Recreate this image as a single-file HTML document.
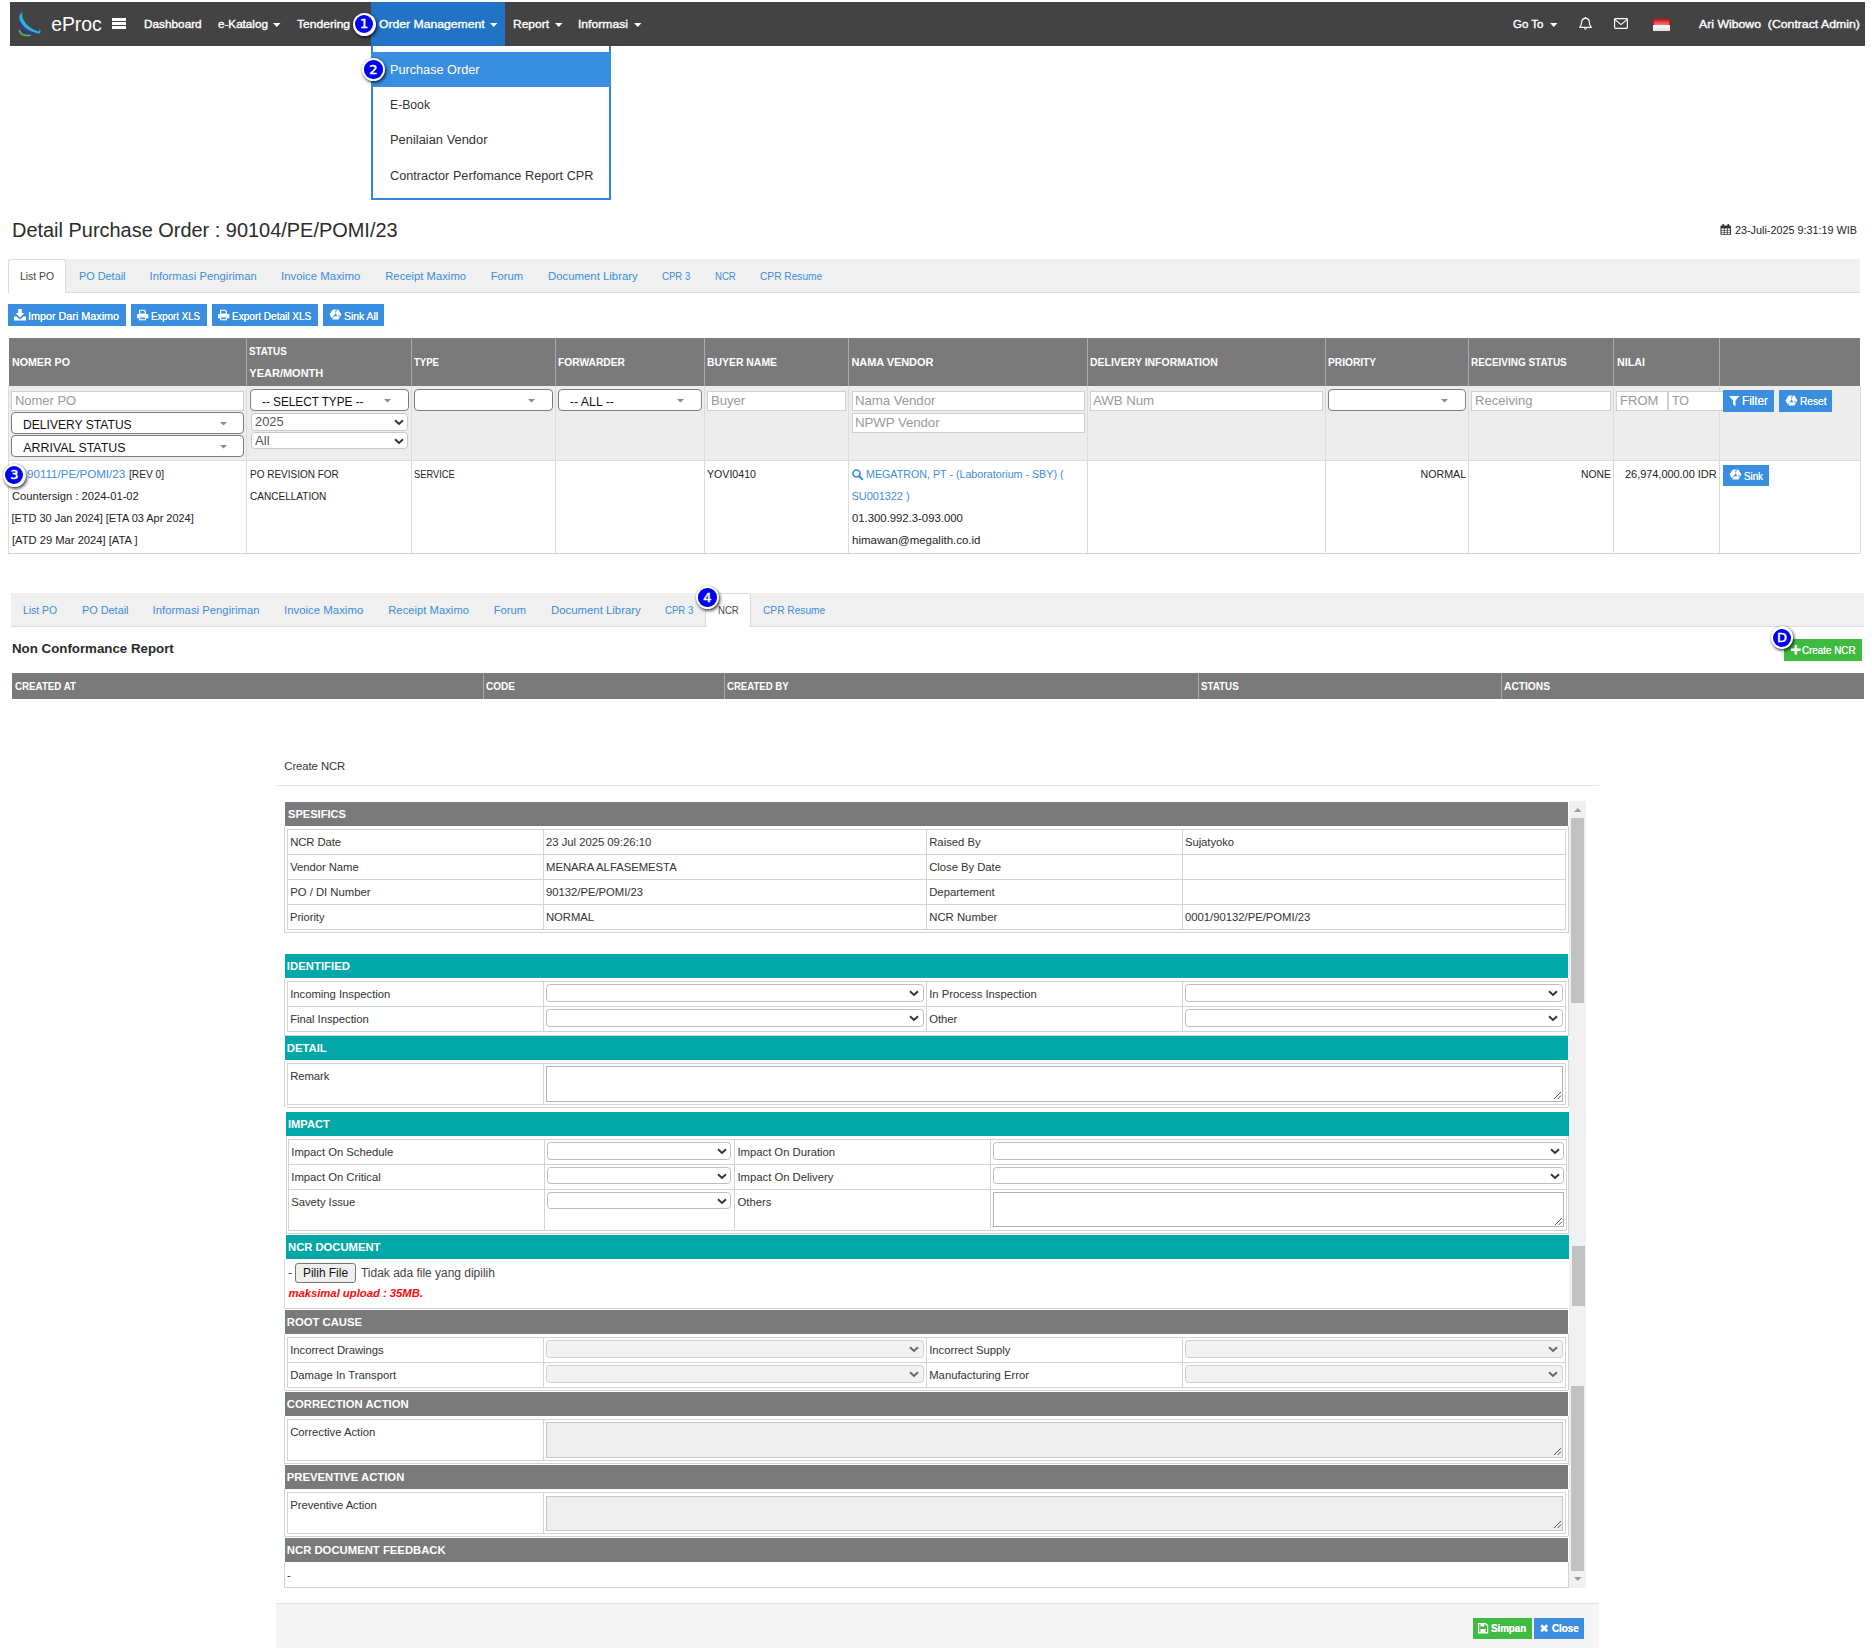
<!DOCTYPE html>
<html lang="id"><head><meta charset="utf-8"><title>eProc - Detail Purchase Order</title>
<style>
html,body{margin:0;padding:0;background:#fff;}
body{width:1872px;height:1648px;position:relative;overflow:hidden;font-family:"Liberation Sans",sans-serif;}
.a{position:absolute;box-sizing:border-box;}
.t{white-space:nowrap;}
svg{display:block;overflow:visible;}
.nv{-webkit-text-stroke:.35px #fff;}
.hb{-webkit-text-stroke:.2px #fff;}
</style></head>
<body>
<div class="a" style="left:10px;top:2px;width:1855px;height:43.5px;background:#434343;"></div>
<div class="a" style="left:371px;top:2px;width:134px;height:43.5px;background:#2173c5;"></div>
<svg class="a" style="left:18px;top:11px;" width="24" height="26" viewBox="0 0 24 26"><path d="M1.5 19.6C2.2 23.4 6.8 25.2 12.2 24.2" fill="none" stroke="#5cb947" stroke-width="1.7" stroke-linecap="round"/><path d="M2 13.2C2 18.6 8 23.4 15.4 22.8" fill="none" stroke="#2b3c9c" stroke-width="2.4" stroke-linecap="round"/><path d="M4.6 1.2C1.2 2.6 0.4 6.2 2.6 10.8C5.6 17 13 21.6 21.4 22.4C22.8 21.8 23 19.8 21.6 17.6C21.8 19.4 21.4 20.4 20.4 20.4C14.2 18.6 9 14.8 6 9.8C4 6.4 3.6 3.4 4.6 1.2Z" fill="#27b4ea"/></svg>
<span class="a t " id="t1" style="top:9.5px;font-size:19.4px;line-height:28px;color:#fff;left:51.3px;letter-spacing:-0.071px;">eProc</span>
<div class="a" style="left:111.8px;top:18px;width:14.2px;height:2.7px;background:#fff;"></div>
<div class="a" style="left:111.8px;top:22.2px;width:14.2px;height:2.7px;background:#fff;"></div>
<div class="a" style="left:111.8px;top:26.4px;width:14.2px;height:2.7px;background:#fff;"></div>
<span class="a t nv" id="t2" style="top:15.9px;font-size:11px;line-height:16px;color:#fff;left:144.4px;transform:scaleX(1.0719);transform-origin:left center;">Dashboard</span>
<span class="a t nv" id="t3" style="top:15.9px;font-size:11px;line-height:16px;color:#fff;left:218px;transform:scaleX(1.0596);transform-origin:left center;">e-Katalog</span>
<svg class="a" style="left:273.4px;top:22.6px;" width="7.5" height="4" viewBox="0 0 7.5 4"><path d="M0 0H7.5L3.75 4Z" fill="#fff"/></svg>
<span class="a t nv" id="t4" style="top:15.9px;font-size:11px;line-height:16px;color:#fff;left:296.7px;transform:scaleX(1.0987);transform-origin:left center;">Tendering</span>
<span class="a t nv" id="t5" style="top:15.9px;font-size:11px;line-height:16px;color:#fff;left:378.6px;transform:scaleX(1.1070);transform-origin:left center;">Order Management</span>
<svg class="a" style="left:490.2px;top:22.6px;" width="7.5" height="4" viewBox="0 0 7.5 4"><path d="M0 0H7.5L3.75 4Z" fill="#fff"/></svg>
<span class="a t nv" id="t6" style="top:15.9px;font-size:11px;line-height:16px;color:#fff;left:513px;transform:scaleX(1.0899);transform-origin:left center;">Report</span>
<svg class="a" style="left:555.2px;top:22.6px;" width="7.5" height="4" viewBox="0 0 7.5 4"><path d="M0 0H7.5L3.75 4Z" fill="#fff"/></svg>
<span class="a t nv" id="t7" style="top:15.9px;font-size:11px;line-height:16px;color:#fff;left:578.2px;transform:scaleX(1.1028);transform-origin:left center;">Informasi</span>
<svg class="a" style="left:634px;top:22.6px;" width="7.5" height="4" viewBox="0 0 7.5 4"><path d="M0 0H7.5L3.75 4Z" fill="#fff"/></svg>
<span class="a t nv" id="t8" style="top:15.9px;font-size:11px;line-height:16px;color:#fff;left:1513.3px;transform:scaleX(1.0427);transform-origin:left center;">Go To</span>
<svg class="a" style="left:1549.7px;top:22.6px;" width="7.5" height="4" viewBox="0 0 7.5 4"><path d="M0 0H7.5L3.75 4Z" fill="#fff"/></svg>
<svg class="a" style="left:1579px;top:17px;" width="13" height="13" viewBox="0 0 13 13"><path d="M6.5 0.6C6.9 0.6 7.2 0.9 7.2 1.4C9.3 1.8 10.4 3.5 10.4 5.6C10.4 8 11.1 9.3 12.3 10.3H0.7C1.9 9.3 2.6 8 2.6 5.6C2.6 3.5 3.7 1.8 5.8 1.4C5.8 0.9 6.1 0.6 6.5 0.6Z" fill="none" stroke="#fff" stroke-width="1.15" stroke-linejoin="round"/><path d="M5 11.2C5.2 12.2 5.8 12.6 6.5 12.6C7.2 12.6 7.8 12.2 8 11.2Z" fill="#fff"/></svg>
<svg class="a" style="left:1614px;top:18.3px;" width="14" height="11" viewBox="0 0 14 11"><rect x="0.6" y="0.6" width="12.8" height="9.8" rx="0.8" fill="none" stroke="#fff" stroke-width="1.15"/><path d="M1 1.6L7 6.6L13 1.6" fill="none" stroke="#fff" stroke-width="1.15"/></svg>
<div class="a" style="left:1652.7px;top:19px;width:17.7px;height:6.4px;background:linear-gradient(#e00808,#e23a3a 25%,#ea7b7b);border:1px solid #e00a0a;border-radius:1px 1px 0 0;border-bottom:none;"></div>
<div class="a" style="left:1652.7px;top:25.4px;width:17.7px;height:5.4px;background:linear-gradient(#fbfbfb,#e2e2e2);"></div>
<span class="a t nv" id="t9" style="top:15.9px;font-size:11px;line-height:16px;color:#fff;left:1699.4px;transform:scaleX(1.1146);transform-origin:left center;white-space:pre;">Ari Wibowo  (Contract Admin)</span>
<div class="a" style="left:352.8px;top:12.8px;width:22.8px;height:22.8px;border-radius:50%;background:#fff;box-shadow:1.2px 1.8px 3.2px rgba(0,0,0,.7),0 0 2px rgba(0,0,0,.25);"></div>
<div class="a" style="left:355.1px;top:15.1px;width:18.2px;height:18.2px;border-radius:50%;background:#0000f0;"></div>
<span class="a t" style="left:354.2px;width:20px;text-align:center;top:15.2px;line-height:18px;font-size:13px;color:#fff;font-family:'DejaVu Sans',sans-serif;-webkit-text-stroke:.5px #fff;">1</span>
<div class="a" style="left:371px;top:45.5px;width:240px;height:154px;background:#fff;border:2px solid #2f86dc;border-top:none;"></div>
<div class="a" style="left:371px;top:52px;width:240px;height:34.7px;background:#398ee0;"></div>
<span class="a t " id="t10" style="top:61px;font-size:12px;line-height:18px;color:#fff;left:389.5px;transform:scaleX(1.0566);transform-origin:left center;">Purchase Order</span>
<span class="a t " id="t11" style="top:95.5px;font-size:12px;line-height:18px;color:#333;left:389.5px;transform:scaleX(1.0163);transform-origin:left center;">E-Book</span>
<span class="a t " id="t12" style="top:130.5px;font-size:12px;line-height:18px;color:#333;left:389.5px;transform:scaleX(1.0744);transform-origin:left center;">Penilaian Vendor</span>
<span class="a t " id="t13" style="top:166.5px;font-size:12px;line-height:18px;color:#333;left:389.5px;transform:scaleX(1.0595);transform-origin:left center;">Contractor Perfomance Report CPR</span>
<div class="a" style="left:362.1px;top:58.1px;width:22.8px;height:22.8px;border-radius:50%;background:#fff;box-shadow:1.2px 1.8px 3.2px rgba(0,0,0,.7),0 0 2px rgba(0,0,0,.25);"></div>
<div class="a" style="left:364.4px;top:60.4px;width:18.2px;height:18.2px;border-radius:50%;background:#0000f0;"></div>
<span class="a t" style="left:363.5px;width:20px;text-align:center;top:60.5px;line-height:18px;font-size:13px;color:#fff;font-family:'DejaVu Sans',sans-serif;-webkit-text-stroke:.5px #fff;">2</span>
<span class="a t " id="t14" style="top:215px;font-size:19.6px;line-height:30px;color:#2b2b2b;left:12px;transform:scaleX(1.0174);transform-origin:left center;">Detail Purchase Order : 90104/PE/POMI/23</span>
<svg class="a" style="left:1720px;top:224.2px;" width="11.5" height="11.8" viewBox="0 0 11.5 11.8"><rect x="0.5" y="1.6" width="10.5" height="9.4" rx="1" fill="#333"/><rect x="2.4" y="0" width="1.6" height="3" rx=".6" fill="#333"/><rect x="7.5" y="0" width="1.6" height="3" rx=".6" fill="#333"/><g fill="#fff"><rect x="1.6" y="4.4" width="2.2" height="1.7"/><rect x="4.65" y="4.4" width="2.2" height="1.7"/><rect x="7.7" y="4.4" width="2.2" height="1.7"/><rect x="1.6" y="6.6" width="2.2" height="1.7"/><rect x="4.65" y="6.6" width="2.2" height="1.7"/><rect x="7.7" y="6.6" width="2.2" height="1.7"/><rect x="1.6" y="8.8" width="2.2" height="1.5"/><rect x="4.65" y="8.8" width="2.2" height="1.5"/><rect x="7.7" y="8.8" width="2.2" height="1.5"/></g></svg>
<span class="a t " id="t15" style="top:222px;font-size:11px;line-height:16px;color:#222;left:1735px;transform:scaleX(0.9828);transform-origin:left center;">23-Juli-2025 9:31:19 WIB</span>
<div class="a" style="left:8px;top:259.3px;width:1852px;height:33.30000000000001px;background:#f0f0f0;"></div>
<div class="a" style="left:8px;top:291.6px;width:1852px;height:1px;background:#dcdcdc;"></div>
<div class="a" style="left:8px;top:259.3px;width:57.5px;height:33.30000000000001px;background:#fff;border:1px solid #dcdcdc;border-radius:4px 4px 0 0;border-bottom:none;"></div>
<span class="a t " id="t16" style="top:267.75px;font-size:11.2px;line-height:17px;color:#444;left:20px;transform:scaleX(0.9267);transform-origin:left center;">List PO</span>
<span class="a t " id="t17" style="top:267.75px;font-size:11.2px;line-height:17px;color:#3b8ddd;left:78.75px;transform:scaleX(0.9713);transform-origin:left center;">PO Detail</span>
<span class="a t " id="t18" style="top:267.75px;font-size:11.2px;line-height:17px;color:#3b8ddd;left:149.5px;letter-spacing:0.077px;">Informasi Pengiriman</span>
<span class="a t " id="t19" style="top:267.75px;font-size:11.2px;line-height:17px;color:#3b8ddd;left:281.25px;transform:scaleX(1.0197);transform-origin:left center;">Invoice Maximo</span>
<span class="a t " id="t20" style="top:267.75px;font-size:11.2px;line-height:17px;color:#3b8ddd;left:385.25px;letter-spacing:0.039px;">Receipt Maximo</span>
<span class="a t " id="t21" style="top:267.75px;font-size:11.2px;line-height:17px;color:#3b8ddd;left:490.75px;letter-spacing:-0.016px;">Forum</span>
<span class="a t " id="t22" style="top:267.75px;font-size:11.2px;line-height:17px;color:#3b8ddd;left:547.5px;transform:scaleX(1.0165);transform-origin:left center;">Document Library</span>
<span class="a t " id="t23" style="top:267.75px;font-size:11.2px;line-height:17px;color:#3b8ddd;left:661.75px;transform:scaleX(0.8573);transform-origin:left center;">CPR 3</span>
<span class="a t " id="t24" style="top:267.75px;font-size:11.2px;line-height:17px;color:#3b8ddd;left:714.5px;transform:scaleX(0.8557);transform-origin:left center;">NCR</span>
<span class="a t " id="t25" style="top:267.75px;font-size:11.2px;line-height:17px;color:#3b8ddd;left:760px;transform:scaleX(0.9102);transform-origin:left center;">CPR Resume</span>
<div class="a" style="left:8px;top:304.3px;width:117.8px;height:21.5px;background:#398ee0;"></div>
<span class="a t " id="t26" style="top:307.15px;font-size:11.6px;line-height:17px;color:#fff;left:28.3px;transform:scaleX(0.9293);transform-origin:left center;text-shadow:0 0 .6px #fff;">Impor Dari Maximo</span>
<svg class="a" style="left:14.2px;top:309.2px;" width="12" height="11.4" viewBox="0 0 12 11.4"><path d="M4.2 0H7.8V4H10.4L6 8.4L1.6 4H4.2Z" fill="#fff"/><path d="M0 7.6H2.6L6 10.6L9.4 7.6H12V11.4H0Z" fill="#fff"/></svg>
<div class="a" style="left:131px;top:304.3px;width:75.80000000000001px;height:21.5px;background:#398ee0;"></div>
<span class="a t " id="t27" style="top:307.15px;font-size:11.6px;line-height:17px;color:#fff;left:151.3px;transform:scaleX(0.8354);transform-origin:left center;text-shadow:0 0 .6px #fff;">Export XLS</span>
<svg class="a" style="left:137.3px;top:309.6px;" width="11.4" height="10.2" viewBox="0 0 13 11"><path d="M3 0H8.2L9.6 1.4V4.4H3Z" fill="none" stroke="#fff" stroke-width="1.3"/><path d="M0.8 4.2H11.8C12.5 4.2 13 4.7 13 5.4V9H10.4V7.2H2.6V9H0V5.4C0 4.7 0.3 4.2 0.8 4.2Z" fill="#fff"/><rect x="3" y="7.6" width="6.8" height="3.2" fill="none" stroke="#fff" stroke-width="1.3"/></svg>
<div class="a" style="left:212px;top:304.3px;width:105.80000000000001px;height:21.5px;background:#398ee0;"></div>
<span class="a t " id="t28" style="top:307.15px;font-size:11.6px;line-height:17px;color:#fff;left:232.2px;transform:scaleX(0.8665);transform-origin:left center;text-shadow:0 0 .6px #fff;">Export Detail XLS</span>
<svg class="a" style="left:218.3px;top:309.6px;" width="11.4" height="10.2" viewBox="0 0 13 11"><path d="M3 0H8.2L9.6 1.4V4.4H3Z" fill="none" stroke="#fff" stroke-width="1.3"/><path d="M0.8 4.2H11.8C12.5 4.2 13 4.7 13 5.4V9H10.4V7.2H2.6V9H0V5.4C0 4.7 0.3 4.2 0.8 4.2Z" fill="#fff"/><rect x="3" y="7.6" width="6.8" height="3.2" fill="none" stroke="#fff" stroke-width="1.3"/></svg>
<div class="a" style="left:323px;top:304.3px;width:60.80000000000001px;height:21.5px;background:#398ee0;"></div>
<span class="a t " id="t29" style="top:307.15px;font-size:11.6px;line-height:17px;color:#fff;left:343.5px;transform:scaleX(0.8940);transform-origin:left center;text-shadow:0 0 .6px #fff;">Sink All</span>
<svg class="a" style="left:329.3px;top:309.4px;" width="13" height="11.2" viewBox="0 0 13 11.2"><path d="M1.4 5.6L4 1.4H9L11.6 5.6L9 9.8H4Z" fill="#fff" stroke="#fff" stroke-width="1.6" stroke-linejoin="round"/><path d="M6.5 4.2L8.3 7.2H4.7Z" fill="#398ee0"/><g stroke="#398ee0" stroke-width="0.9" fill="none"><path d="M7.4 0L6.6 3.6"/><path d="M12.6 7.4L9 6.8"/><path d="M2.6 10.6L4.6 7.6"/></g></svg>
<div class="a" style="left:8.5px;top:338px;width:1851.8px;height:47.8px;background:#7a7a7a;"></div>
<div class="a" style="left:8.5px;top:385.8px;width:1851.8px;height:75px;background:#ededed;"></div>
<div class="a" style="left:245.8px;top:338px;width:1px;height:47.8px;background:#a9a9a9;"></div>
<div class="a" style="left:245.8px;top:385.8px;width:1px;height:75px;background:#dcdcdc;"></div>
<div class="a" style="left:245.8px;top:460.8px;width:1px;height:92.5px;background:#dcdcdc;"></div>
<div class="a" style="left:410.8px;top:338px;width:1px;height:47.8px;background:#a9a9a9;"></div>
<div class="a" style="left:410.8px;top:385.8px;width:1px;height:75px;background:#dcdcdc;"></div>
<div class="a" style="left:410.8px;top:460.8px;width:1px;height:92.5px;background:#dcdcdc;"></div>
<div class="a" style="left:554.8px;top:338px;width:1px;height:47.8px;background:#a9a9a9;"></div>
<div class="a" style="left:554.8px;top:385.8px;width:1px;height:75px;background:#dcdcdc;"></div>
<div class="a" style="left:554.8px;top:460.8px;width:1px;height:92.5px;background:#dcdcdc;"></div>
<div class="a" style="left:703.8px;top:338px;width:1px;height:47.8px;background:#a9a9a9;"></div>
<div class="a" style="left:703.8px;top:385.8px;width:1px;height:75px;background:#dcdcdc;"></div>
<div class="a" style="left:703.8px;top:460.8px;width:1px;height:92.5px;background:#dcdcdc;"></div>
<div class="a" style="left:847.9px;top:338px;width:1px;height:47.8px;background:#a9a9a9;"></div>
<div class="a" style="left:847.9px;top:385.8px;width:1px;height:75px;background:#dcdcdc;"></div>
<div class="a" style="left:847.9px;top:460.8px;width:1px;height:92.5px;background:#dcdcdc;"></div>
<div class="a" style="left:1087.0px;top:338px;width:1px;height:47.8px;background:#a9a9a9;"></div>
<div class="a" style="left:1087.0px;top:385.8px;width:1px;height:75px;background:#dcdcdc;"></div>
<div class="a" style="left:1087.0px;top:460.8px;width:1px;height:92.5px;background:#dcdcdc;"></div>
<div class="a" style="left:1324.9px;top:338px;width:1px;height:47.8px;background:#a9a9a9;"></div>
<div class="a" style="left:1324.9px;top:385.8px;width:1px;height:75px;background:#dcdcdc;"></div>
<div class="a" style="left:1324.9px;top:460.8px;width:1px;height:92.5px;background:#dcdcdc;"></div>
<div class="a" style="left:1467.5px;top:338px;width:1px;height:47.8px;background:#a9a9a9;"></div>
<div class="a" style="left:1467.5px;top:385.8px;width:1px;height:75px;background:#dcdcdc;"></div>
<div class="a" style="left:1467.5px;top:460.8px;width:1px;height:92.5px;background:#dcdcdc;"></div>
<div class="a" style="left:1612.7px;top:338px;width:1px;height:47.8px;background:#a9a9a9;"></div>
<div class="a" style="left:1612.7px;top:385.8px;width:1px;height:75px;background:#dcdcdc;"></div>
<div class="a" style="left:1612.7px;top:460.8px;width:1px;height:92.5px;background:#dcdcdc;"></div>
<div class="a" style="left:1719.0px;top:338px;width:1px;height:47.8px;background:#a9a9a9;"></div>
<div class="a" style="left:1719.0px;top:385.8px;width:1px;height:75px;background:#dcdcdc;"></div>
<div class="a" style="left:1719.0px;top:460.8px;width:1px;height:92.5px;background:#dcdcdc;"></div>
<div class="a" style="left:8px;top:385.8px;width:1px;height:167.5px;background:#dcdcdc;"></div>
<div class="a" style="left:1859.8px;top:385.8px;width:1px;height:167.5px;background:#dcdcdc;"></div>
<div class="a" style="left:8px;top:460.3px;width:1852.3px;height:1px;background:#dcdcdc;"></div>
<div class="a" style="left:8px;top:552.6px;width:1852.3px;height:1.4px;background:#d2d2d2;"></div>
<span class="a t " id="t30" style="top:353.8px;font-size:11px;line-height:16px;color:#fff;font-weight:700;left:11.5px;transform:scaleX(0.9682);transform-origin:left center;">NOMER PO</span>
<span class="a t " id="t31" style="top:342.8px;font-size:11px;line-height:16px;color:#fff;font-weight:700;left:249.3px;transform:scaleX(0.8897);transform-origin:left center;">STATUS</span>
<span class="a t " id="t32" style="top:364.8px;font-size:11px;line-height:16px;color:#fff;font-weight:700;left:249.3px;letter-spacing:0.005px;">YEAR/MONTH</span>
<span class="a t " id="t33" style="top:353.8px;font-size:11px;line-height:16px;color:#fff;font-weight:700;left:414.3px;transform:scaleX(0.8700);transform-origin:left center;">TYPE</span>
<span class="a t " id="t34" style="top:353.8px;font-size:11px;line-height:16px;color:#fff;font-weight:700;left:558px;transform:scaleX(0.9316);transform-origin:left center;">FORWARDER</span>
<span class="a t " id="t35" style="top:353.8px;font-size:11px;line-height:16px;color:#fff;font-weight:700;left:707px;transform:scaleX(0.9465);transform-origin:left center;">BUYER NAME</span>
<span class="a t " id="t36" style="top:353.8px;font-size:11px;line-height:16px;color:#fff;font-weight:700;left:851.5px;letter-spacing:-0.084px;">NAMA VENDOR</span>
<span class="a t " id="t37" style="top:353.8px;font-size:11px;line-height:16px;color:#fff;font-weight:700;left:1090px;transform:scaleX(0.9512);transform-origin:left center;">DELIVERY INFORMATION</span>
<span class="a t " id="t38" style="top:353.8px;font-size:11px;line-height:16px;color:#fff;font-weight:700;left:1328.4px;transform:scaleX(0.9258);transform-origin:left center;">PRIORITY</span>
<span class="a t " id="t39" style="top:353.8px;font-size:11px;line-height:16px;color:#fff;font-weight:700;left:1471.3px;transform:scaleX(0.9034);transform-origin:left center;">RECEIVING STATUS</span>
<span class="a t " id="t40" style="top:353.8px;font-size:11px;line-height:16px;color:#fff;font-weight:700;left:1616.5px;transform:scaleX(0.9744);transform-origin:left center;">NILAI</span>
<div class="a" style="left:11px;top:391.4px;width:232.6px;height:20.0px;background:#fff;border:1px solid #cfcfcf;"></div>
<span class="a t " id="t41" style="top:391.1px;font-size:13.3px;line-height:20px;color:#9a9a9a;left:15px;transform:scaleX(0.9743);transform-origin:left center;">Nomer PO</span>
<div class="a" style="left:11px;top:412.4px;width:233px;height:22.0px;background:#fff;border:1px solid #7d7d7d;border-radius:4px;"></div>
<span class="a t " id="t42" style="top:416.3px;font-size:12.4px;line-height:19px;color:#111;left:23.3px;transform:scaleX(0.9764);transform-origin:left center;">DELIVERY STATUS</span>
<svg class="a" style="left:219.5px;top:421.79999999999995px;" width="7" height="3.6" viewBox="0 0 7 3.6"><path d="M0 0H7L3.5 3.6Z" fill="#8a8a8a"/></svg>
<div class="a" style="left:11px;top:435.4px;width:233px;height:22.0px;background:#fff;border:1px solid #7d7d7d;border-radius:4px;"></div>
<span class="a t " id="t43" style="top:439.3px;font-size:12.4px;line-height:19px;color:#111;left:23.3px;letter-spacing:0.005px;">ARRIVAL STATUS</span>
<svg class="a" style="left:219.5px;top:444.79999999999995px;" width="7" height="3.6" viewBox="0 0 7 3.6"><path d="M0 0H7L3.5 3.6Z" fill="#8a8a8a"/></svg>
<div class="a" style="left:250px;top:389.4px;width:158.8px;height:22.0px;background:#fff;border:1px solid #7d7d7d;border-radius:4px;"></div>
<span class="a t " id="t44" style="top:393.3px;font-size:12.4px;line-height:19px;color:#111;left:261.8px;transform:scaleX(0.9490);transform-origin:left center;">-- SELECT TYPE --</span>
<svg class="a" style="left:384.3px;top:398.79999999999995px;" width="7" height="3.6" viewBox="0 0 7 3.6"><path d="M0 0H7L3.5 3.6Z" fill="#8a8a8a"/></svg>
<div class="a" style="left:250.6px;top:413.4px;width:157.6px;height:17.200000000000045px;background:#fff;border:1px solid #c9c9c9;border-radius:3.5px;"></div>
<span class="a t " id="t45" style="top:411.8px;font-size:13.5px;line-height:20px;color:#555;left:254.6px;transform:scaleX(0.9552);transform-origin:left center;">2025</span>
<svg class="a" style="left:393.8px;top:419.0px;" width="10" height="6.2" viewBox="0 0 10 6.2"><path d="M1 1.2L5 5L9 1.2" fill="none" stroke="#333" stroke-width="1.9"/></svg>
<div class="a" style="left:250.6px;top:432px;width:157.6px;height:17.19999999999999px;background:#fff;border:1px solid #c9c9c9;border-radius:3.5px;"></div>
<span class="a t " id="t46" style="top:431.2px;font-size:13.5px;line-height:20px;color:#555;left:254.6px;transform:scaleX(0.9790);transform-origin:left center;">All</span>
<svg class="a" style="left:393.8px;top:437.6px;" width="10" height="6.2" viewBox="0 0 10 6.2"><path d="M1 1.2L5 5L9 1.2" fill="none" stroke="#333" stroke-width="1.9"/></svg>
<div class="a" style="left:414.3px;top:389.4px;width:138.49999999999994px;height:22.0px;background:#fff;border:1px solid #7d7d7d;border-radius:4px;"></div>
<svg class="a" style="left:528.3px;top:398.79999999999995px;" width="7" height="3.6" viewBox="0 0 7 3.6"><path d="M0 0H7L3.5 3.6Z" fill="#8a8a8a"/></svg>
<div class="a" style="left:558px;top:389.4px;width:143.79999999999995px;height:22.0px;background:#fff;border:1px solid #7d7d7d;border-radius:4px;"></div>
<span class="a t " id="t47" style="top:393.3px;font-size:12.4px;line-height:19px;color:#111;left:569.8px;letter-spacing:-0.011px;">-- ALL --</span>
<svg class="a" style="left:677.3px;top:398.79999999999995px;" width="7" height="3.6" viewBox="0 0 7 3.6"><path d="M0 0H7L3.5 3.6Z" fill="#8a8a8a"/></svg>
<div class="a" style="left:707px;top:391.4px;width:138.79999999999995px;height:20.0px;background:#fff;border:1px solid #cfcfcf;"></div>
<span class="a t " id="t48" style="top:391.1px;font-size:13.3px;line-height:20px;color:#9a9a9a;left:710.8px;transform:scaleX(0.9842);transform-origin:left center;">Buyer</span>
<div class="a" style="left:852px;top:391.4px;width:232.5999999999999px;height:20.0px;background:#fff;border:1px solid #cfcfcf;"></div>
<span class="a t " id="t49" style="top:391.1px;font-size:13.3px;line-height:20px;color:#9a9a9a;left:855px;letter-spacing:-0.092px;">Nama Vendor</span>
<div class="a" style="left:852px;top:413.4px;width:232.5999999999999px;height:20.0px;background:#fff;border:1px solid #cfcfcf;"></div>
<span class="a t " id="t50" style="top:413.1px;font-size:13.3px;line-height:20px;color:#9a9a9a;left:855px;letter-spacing:-0.091px;">NPWP Vendor</span>
<div class="a" style="left:1090px;top:391.4px;width:232.5999999999999px;height:20.0px;background:#fff;border:1px solid #cfcfcf;"></div>
<span class="a t " id="t51" style="top:391.1px;font-size:13.3px;line-height:20px;color:#9a9a9a;left:1093px;letter-spacing:-0.083px;">AWB Num</span>
<div class="a" style="left:1328px;top:389.4px;width:137.5999999999999px;height:22.0px;background:#fff;border:1px solid #7d7d7d;border-radius:4px;"></div>
<svg class="a" style="left:1441.1px;top:398.79999999999995px;" width="7" height="3.6" viewBox="0 0 7 3.6"><path d="M0 0H7L3.5 3.6Z" fill="#8a8a8a"/></svg>
<div class="a" style="left:1471px;top:391.4px;width:139.79999999999995px;height:20.0px;background:#fff;border:1px solid #cfcfcf;"></div>
<span class="a t " id="t52" style="top:391.1px;font-size:13.3px;line-height:20px;color:#9a9a9a;left:1474.9px;transform:scaleX(0.9847);transform-origin:left center;">Receiving</span>
<div class="a" style="left:1616px;top:391.4px;width:52.299999999999955px;height:20.0px;background:#fff;border:1px solid #cfcfcf;"></div>
<span class="a t " id="t53" style="top:391.1px;font-size:13.3px;line-height:20px;color:#9a9a9a;left:1620px;transform:scaleX(0.9807);transform-origin:left center;">FROM</span>
<div class="a" style="left:1667.8px;top:391.4px;width:56.200000000000045px;height:20.0px;background:#fff;border:1px solid #cfcfcf;"></div>
<span class="a t " id="t54" style="top:391.1px;font-size:13.3px;line-height:20px;color:#9a9a9a;left:1672px;transform:scaleX(0.9323);transform-origin:left center;">TO</span>
<div class="a" style="left:1723px;top:390px;width:51px;height:22px;background:#398ee0;"></div>
<span class="a t " id="t55" style="top:392.1px;font-size:12.5px;line-height:19px;color:#fff;left:1741.5px;transform:scaleX(0.9359);transform-origin:left center;text-shadow:0 0 .6px #fff;">Filter</span>
<svg class="a" style="left:1729px;top:396.2px;" width="10.5" height="10.2" viewBox="0 0 10.5 10.2"><path d="M0 0H10.5L6.5 4.6V10.2L4 8.4V4.6Z" fill="#fff"/></svg>
<div class="a" style="left:1779px;top:390px;width:53px;height:22px;background:#398ee0;"></div>
<span class="a t " id="t56" style="top:393.6px;font-size:10.4px;line-height:16px;color:#fff;left:1799.5px;transform:scaleX(0.9758);transform-origin:left center;text-shadow:0 0 .6px #fff;">Reset</span>
<svg class="a" style="left:1785px;top:395px;" width="13" height="11.2" viewBox="0 0 13 11.2"><path d="M1.4 5.6L4 1.4H9L11.6 5.6L9 9.8H4Z" fill="#fff" stroke="#fff" stroke-width="1.6" stroke-linejoin="round"/><path d="M6.5 4.2L8.3 7.2H4.7Z" fill="#398ee0"/><g stroke="#398ee0" stroke-width="0.9" fill="none"><path d="M7.4 0L6.6 3.6"/><path d="M12.6 7.4L9 6.8"/><path d="M2.6 10.6L4.6 7.6"/></g></svg>
<span class="a t " id="t57" style="top:466.3px;font-size:11px;line-height:16px;color:#3b8ddd;left:26.5px;transform:scaleX(1.0541);transform-origin:left center;">90111/PE/POMI/23</span>
<span class="a t " id="t58" style="top:466.3px;font-size:11px;line-height:16px;color:#222;left:128.5px;transform:scaleX(0.9233);transform-origin:left center;">[REV 0]</span>
<span class="a t " id="t59" style="top:488.3px;font-size:11px;line-height:16px;color:#222;left:11.5px;transform:scaleX(1.0164);transform-origin:left center;">Countersign : 2024-01-02</span>
<span class="a t " id="t60" style="top:510.3px;font-size:11px;line-height:16px;color:#222;left:11.5px;letter-spacing:-0.030px;">[ETD 30 Jan 2024] [ETA 03 Apr 2024]</span>
<span class="a t " id="t61" style="top:532.3px;font-size:11px;line-height:16px;color:#222;left:11.5px;transform:scaleX(1.0162);transform-origin:left center;">[ATD 29 Mar 2024] [ATA ]</span>
<span class="a t " id="t62" style="top:466.3px;font-size:11px;line-height:16px;color:#222;left:249.5px;transform:scaleX(0.9080);transform-origin:left center;">PO REVISION FOR</span>
<span class="a t " id="t63" style="top:488.3px;font-size:11px;line-height:16px;color:#222;left:249.5px;transform:scaleX(0.9133);transform-origin:left center;">CANCELLATION</span>
<span class="a t " id="t64" style="top:466.3px;font-size:11px;line-height:16px;color:#222;left:414.3px;transform:scaleX(0.8463);transform-origin:left center;">SERVICE</span>
<span class="a t " id="t65" style="top:466.3px;font-size:11px;line-height:16px;color:#222;left:707px;transform:scaleX(0.9652);transform-origin:left center;">YOVI0410</span>
<svg class="a" style="left:851.5px;top:469px;" width="11" height="11" viewBox="0 0 11 11"><circle cx="4.5" cy="4.5" r="3.5" fill="none" stroke="#3b8ddd" stroke-width="1.7"/><path d="M7 7L10.3 10.3" stroke="#3b8ddd" stroke-width="2" stroke-linecap="round"/></svg>
<span class="a t " id="t66" style="top:466.3px;font-size:11px;line-height:16px;color:#3b8ddd;left:866px;transform:scaleX(0.9722);transform-origin:left center;">MEGATRON, PT - (Laboratorium - SBY) (</span>
<span class="a t " id="t67" style="top:488.3px;font-size:11px;line-height:16px;color:#3b8ddd;left:851.5px;letter-spacing:-0.072px;">SU001322 )</span>
<span class="a t " id="t68" style="top:510.3px;font-size:11px;line-height:16px;color:#222;left:851.5px;transform:scaleX(1.0292);transform-origin:left center;">01.300.992.3-093.000</span>
<span class="a t " id="t69" style="top:532.3px;font-size:11px;line-height:16px;color:#222;left:851.5px;transform:scaleX(1.0442);transform-origin:left center;">himawan@megalith.co.id</span>
<span class="a t " id="t70" style="top:466.3px;font-size:11px;line-height:16px;color:#222;right:406.4px;transform:scaleX(0.9689);transform-origin:right center;">NORMAL</span>
<span class="a t " id="t71" style="top:466.3px;font-size:11px;line-height:16px;color:#222;right:261.2px;transform:scaleX(0.9377);transform-origin:right center;">NONE</span>
<span class="a t " id="t72" style="top:466.3px;font-size:11px;line-height:16px;color:#222;left:1625px;letter-spacing:-0.045px;">26,974,000.00 IDR</span>
<div class="a" style="left:1723px;top:464.5px;width:46px;height:21.5px;background:#398ee0;"></div>
<span class="a t " id="t73" style="top:467.55px;font-size:10.6px;line-height:16px;color:#fff;left:1744px;transform:scaleX(0.9219);transform-origin:left center;text-shadow:0 0 .6px #fff;">Sink</span>
<svg class="a" style="left:1729px;top:469.4px;" width="13" height="11.2" viewBox="0 0 13 11.2"><path d="M1.4 5.6L4 1.4H9L11.6 5.6L9 9.8H4Z" fill="#fff" stroke="#fff" stroke-width="1.6" stroke-linejoin="round"/><path d="M6.5 4.2L8.3 7.2H4.7Z" fill="#398ee0"/><g stroke="#398ee0" stroke-width="0.9" fill="none"><path d="M7.4 0L6.6 3.6"/><path d="M12.6 7.4L9 6.8"/><path d="M2.6 10.6L4.6 7.6"/></g></svg>
<div class="a" style="left:2.9px;top:464px;width:22.8px;height:22.8px;border-radius:50%;background:#fff;box-shadow:1.2px 1.8px 3.2px rgba(0,0,0,.7),0 0 2px rgba(0,0,0,.25);"></div>
<div class="a" style="left:5.2px;top:466.3px;width:18.2px;height:18.2px;border-radius:50%;background:#0000f0;"></div>
<span class="a t" style="left:4.3px;width:20px;text-align:center;top:466.4px;line-height:18px;font-size:13px;color:#fff;font-family:'DejaVu Sans',sans-serif;-webkit-text-stroke:.5px #fff;">3</span>
<div class="a" style="left:11px;top:593px;width:1853px;height:33.5px;background:#f0f0f0;"></div>
<div class="a" style="left:11px;top:625.5px;width:1853px;height:1px;background:#dcdcdc;"></div>
<span class="a t " id="t74" style="top:601.55px;font-size:11.2px;line-height:17px;color:#3b8ddd;left:23.25px;transform:scaleX(0.9267);transform-origin:left center;">List PO</span>
<span class="a t " id="t75" style="top:601.55px;font-size:11.2px;line-height:17px;color:#3b8ddd;left:81.75px;transform:scaleX(0.9713);transform-origin:left center;">PO Detail</span>
<span class="a t " id="t76" style="top:601.55px;font-size:11.2px;line-height:17px;color:#3b8ddd;left:152.5px;letter-spacing:0.065px;">Informasi Pengiriman</span>
<span class="a t " id="t77" style="top:601.55px;font-size:11.2px;line-height:17px;color:#3b8ddd;left:284.25px;transform:scaleX(1.0197);transform-origin:left center;">Invoice Maximo</span>
<span class="a t " id="t78" style="top:601.55px;font-size:11.2px;line-height:17px;color:#3b8ddd;left:388.25px;letter-spacing:0.039px;">Receipt Maximo</span>
<span class="a t " id="t79" style="top:601.55px;font-size:11.2px;line-height:17px;color:#3b8ddd;left:493.75px;letter-spacing:-0.016px;">Forum</span>
<span class="a t " id="t80" style="top:601.55px;font-size:11.2px;line-height:17px;color:#3b8ddd;left:550.5px;transform:scaleX(1.0165);transform-origin:left center;">Document Library</span>
<span class="a t " id="t81" style="top:601.55px;font-size:11.2px;line-height:17px;color:#3b8ddd;left:664.75px;transform:scaleX(0.8573);transform-origin:left center;">CPR 3</span>
<div class="a" style="left:705.2px;top:593px;width:45.39999999999998px;height:33.5px;background:#fff;border:1px solid #dcdcdc;border-radius:4px 4px 0 0;border-bottom:none;"></div>
<span class="a t " id="t82" style="top:601.55px;font-size:11.2px;line-height:17px;color:#444;left:717.5px;transform:scaleX(0.8557);transform-origin:left center;">NCR</span>
<span class="a t " id="t83" style="top:601.55px;font-size:11.2px;line-height:17px;color:#3b8ddd;left:763px;transform:scaleX(0.9102);transform-origin:left center;">CPR Resume</span>
<div class="a" style="left:696.1px;top:586.1px;width:22.8px;height:22.8px;border-radius:50%;background:#fff;box-shadow:1.2px 1.8px 3.2px rgba(0,0,0,.7),0 0 2px rgba(0,0,0,.25);"></div>
<div class="a" style="left:698.4px;top:588.4px;width:18.2px;height:18.2px;border-radius:50%;background:#0000f0;"></div>
<span class="a t" style="left:697.5px;width:20px;text-align:center;top:588.5px;line-height:18px;font-size:13px;color:#fff;font-family:'DejaVu Sans',sans-serif;-webkit-text-stroke:.5px #fff;">4</span>
<span class="a t " id="t84" style="top:639.3px;font-size:13.5px;line-height:20px;color:#2a2a2a;font-weight:700;left:11.5px;transform:scaleX(0.9850);transform-origin:left center;">Non Conformance Report</span>
<div class="a" style="left:1784px;top:639.2px;width:77.79999999999995px;height:21.59999999999991px;background:#40bb42;"></div>
<span class="a t " id="t85" style="top:642.2px;font-size:10.6px;line-height:16px;color:#fff;left:1802px;transform:scaleX(0.9272);transform-origin:left center;text-shadow:0 0 .6px #fff;">Create NCR</span>
<svg class="a" style="left:1790.5px;top:645px;" width="9.6" height="9.6" viewBox="0 0 9.6 9.6"><path d="M3.5 0H6.1V3.5H9.6V6.1H6.1V9.6H3.5V6.1H0V3.5H3.5Z" fill="#fff"/></svg>
<div class="a" style="left:1770.5px;top:626.4px;width:22.8px;height:22.8px;border-radius:50%;background:#fff;box-shadow:1.2px 1.8px 3.2px rgba(0,0,0,.7),0 0 2px rgba(0,0,0,.25);"></div>
<div class="a" style="left:1772.8px;top:628.7px;width:18.2px;height:18.2px;border-radius:50%;background:#0000f0;"></div>
<span class="a t" style="left:1771.9px;width:20px;text-align:center;top:628.8px;line-height:18px;font-size:13px;color:#fff;font-family:'DejaVu Sans',sans-serif;-webkit-text-stroke:.5px #fff;">D</span>
<div class="a" style="left:11.5px;top:673px;width:1852px;height:26px;background:#7a7a7a;"></div>
<div class="a" style="left:482.8px;top:673px;width:1px;height:26px;background:#a9a9a9;"></div>
<div class="a" style="left:723.8px;top:673px;width:1px;height:26px;background:#a9a9a9;"></div>
<div class="a" style="left:1197.8px;top:673px;width:1px;height:26px;background:#a9a9a9;"></div>
<div class="a" style="left:1500.8px;top:673px;width:1px;height:26px;background:#a9a9a9;"></div>
<span class="a t " id="t86" style="top:677.8px;font-size:11px;line-height:16px;color:#fff;font-weight:700;left:14.5px;transform:scaleX(0.8859);transform-origin:left center;">CREATED AT</span>
<span class="a t " id="t87" style="top:677.8px;font-size:11px;line-height:16px;color:#fff;font-weight:700;left:486.3px;transform:scaleX(0.9125);transform-origin:left center;">CODE</span>
<span class="a t " id="t88" style="top:677.8px;font-size:11px;line-height:16px;color:#fff;font-weight:700;left:727.3px;transform:scaleX(0.8727);transform-origin:left center;">CREATED BY</span>
<span class="a t " id="t89" style="top:677.8px;font-size:11px;line-height:16px;color:#fff;font-weight:700;left:1201.3px;transform:scaleX(0.8897);transform-origin:left center;">STATUS</span>
<span class="a t " id="t90" style="top:677.8px;font-size:11px;line-height:16px;color:#fff;font-weight:700;left:1504.3px;transform:scaleX(0.9293);transform-origin:left center;">ACTIONS</span>
<span class="a t " id="t91" style="top:757.7px;font-size:11.3px;line-height:17px;color:#333;left:284.3px;letter-spacing:-0.063px;">Create NCR</span>
<div class="a" style="left:276.3px;top:785px;width:1322.5px;height:1px;background:#e5e5e5;"></div>
<div class="a" style="left:276px;top:1603.2px;width:1323px;height:45px;background:#f5f5f5;"></div>
<div class="a" style="left:276px;top:1603.2px;width:1323px;height:1px;background:#e2e2e2;"></div>
<div class="a" style="left:1473px;top:1618px;width:58.59999999999991px;height:20.799999999999955px;background:#40bb42;"></div>
<span class="a t " id="t92" style="top:1620.9px;font-size:10.4px;line-height:16px;color:#fff;font-weight:700;left:1491px;transform:scaleX(0.9379);transform-origin:left center;text-shadow:0 0 .6px #fff;">Simpan</span>
<svg class="a" style="left:1478.2px;top:1623px;" width="10" height="10.4" viewBox="0 0 10 10.4"><path d="M0.6 0.6H7.6L9.6 2.6V9.8H0.6Z" fill="none" stroke="#fff" stroke-width="1.2"/><rect x="2.4" y="0.8" width="4" height="2.6" fill="#fff"/><rect x="2.4" y="6" width="5.2" height="3.6" fill="#fff"/></svg>
<div class="a" style="left:1534.2px;top:1618px;width:49.59999999999991px;height:20.799999999999955px;background:#398ee0;"></div>
<span class="a t " id="t93" style="top:1620.9px;font-size:10.4px;line-height:16px;color:#fff;font-weight:700;left:1551.6px;transform:scaleX(0.9400);transform-origin:left center;text-shadow:0 0 .6px #fff;">Close</span>
<svg class="a" style="left:1540px;top:1624.4px;" width="8.4" height="8.4" viewBox="0 0 8.4 8.4"><path d="M1.2 1.2L7.2 7.2M7.2 1.2L1.2 7.2" stroke="#fff" stroke-width="2.7"/></svg>
<div class="a" style="left:1568.6px;top:801.4px;width:17.2px;height:786.2px;background:#f1f1f1;"></div>
<svg class="a" style="left:1573.8px;top:807.6px;" width="7.6" height="4" viewBox="0 0 7.6 4"><path d="M0 4H7.6L3.8 0Z" fill="#9b9b9b"/></svg>
<div class="a" style="left:1571.2px;top:818.2px;width:12.6px;height:184.8px;background:#c1c1c1;"></div>
<div class="a" style="left:1572.4px;top:1246px;width:12.6px;height:59.8px;background:#c1c1c1;"></div>
<div class="a" style="left:1571.2px;top:1386.2px;width:12.6px;height:185px;background:#c1c1c1;"></div>
<svg class="a" style="left:1574px;top:1577.2px;" width="7.6" height="4" viewBox="0 0 7.6 4"><path d="M0 0H7.6L3.8 4Z" fill="#9b9b9b"/></svg>
<div class="a" style="left:285px;top:801.8px;width:1283.3px;height:24.200000000000045px;background:#7a7a7a;"></div>
<span class="a t " id="t94" style="top:805.7px;font-size:11.3px;line-height:17px;color:#fff;font-weight:700;left:288px;transform:scaleX(0.9828);transform-origin:left center;">SPESIFICS</span>
<div class="a" style="left:284.3px;top:826px;width:1284.6px;height:106.6px;border:1px solid #d3d3d3;border-top:none;"></div>
<div class="a" style="left:287.1px;top:829.0px;width:256.5999999999999px;height:26.0px;background:#fff;border:1px solid #d3d3d3;"></div>
<div class="a" style="left:542.9px;top:829.0px;width:383.70000000000005px;height:26.0px;background:#fff;border:1px solid #d3d3d3;"></div>
<div class="a" style="left:925.8000000000001px;top:829.0px;width:257.0000000000001px;height:26.0px;background:#fff;border:1px solid #d3d3d3;"></div>
<div class="a" style="left:1182.0px;top:829.0px;width:383.9000000000001px;height:26.0px;background:#fff;border:1px solid #d3d3d3;"></div>
<div class="a" style="left:287.1px;top:854.2px;width:256.5999999999999px;height:25.799999999999955px;background:#fff;border:1px solid #d3d3d3;"></div>
<div class="a" style="left:542.9px;top:854.2px;width:383.70000000000005px;height:25.799999999999955px;background:#fff;border:1px solid #d3d3d3;"></div>
<div class="a" style="left:925.8000000000001px;top:854.2px;width:257.0000000000001px;height:25.799999999999955px;background:#fff;border:1px solid #d3d3d3;"></div>
<div class="a" style="left:1182.0px;top:854.2px;width:383.9000000000001px;height:25.799999999999955px;background:#fff;border:1px solid #d3d3d3;"></div>
<div class="a" style="left:287.1px;top:879.2px;width:256.5999999999999px;height:25.799999999999955px;background:#fff;border:1px solid #d3d3d3;"></div>
<div class="a" style="left:542.9px;top:879.2px;width:383.70000000000005px;height:25.799999999999955px;background:#fff;border:1px solid #d3d3d3;"></div>
<div class="a" style="left:925.8000000000001px;top:879.2px;width:257.0000000000001px;height:25.799999999999955px;background:#fff;border:1px solid #d3d3d3;"></div>
<div class="a" style="left:1182.0px;top:879.2px;width:383.9000000000001px;height:25.799999999999955px;background:#fff;border:1px solid #d3d3d3;"></div>
<div class="a" style="left:287.1px;top:904.2px;width:256.5999999999999px;height:25.899999999999977px;background:#fff;border:1px solid #d3d3d3;"></div>
<div class="a" style="left:542.9px;top:904.2px;width:383.70000000000005px;height:25.899999999999977px;background:#fff;border:1px solid #d3d3d3;"></div>
<div class="a" style="left:925.8000000000001px;top:904.2px;width:257.0000000000001px;height:25.899999999999977px;background:#fff;border:1px solid #d3d3d3;"></div>
<div class="a" style="left:1182.0px;top:904.2px;width:383.9000000000001px;height:25.899999999999977px;background:#fff;border:1px solid #d3d3d3;"></div>
<span class="a t " id="t95" style="top:833.7px;font-size:11.3px;line-height:17px;color:#333;left:290.2px;letter-spacing:-0.086px;">NCR Date</span>
<span class="a t " id="t96" style="top:833.7px;font-size:11.3px;line-height:17px;color:#333;left:546px;letter-spacing:-0.017px;">23 Jul 2025 09:26:10</span>
<span class="a t " id="t97" style="top:833.7px;font-size:11.3px;line-height:17px;color:#333;left:929.2px;letter-spacing:0.000px;">Raised By</span>
<span class="a t " id="t98" style="top:833.7px;font-size:11.3px;line-height:17px;color:#333;left:1185px;letter-spacing:-0.069px;">Sujatyoko</span>
<span class="a t " id="t99" style="top:858.8px;font-size:11.3px;line-height:17px;color:#333;left:290.2px;letter-spacing:-0.053px;">Vendor Name</span>
<span class="a t " id="t100" style="top:858.8px;font-size:11.3px;line-height:17px;color:#333;left:546px;letter-spacing:-0.018px;">MENARA ALFASEMESTA</span>
<span class="a t " id="t101" style="top:858.8px;font-size:11.3px;line-height:17px;color:#333;left:929.2px;letter-spacing:-0.032px;">Close By Date</span>
<span class="a t " id="t102" style="top:883.8px;font-size:11.3px;line-height:17px;color:#333;left:290.2px;letter-spacing:-0.004px;">PO / DI Number</span>
<span class="a t " id="t103" style="top:883.8px;font-size:11.3px;line-height:17px;color:#333;left:546px;letter-spacing:-0.021px;">90132/PE/POMI/23</span>
<span class="a t " id="t104" style="top:883.8px;font-size:11.3px;line-height:17px;color:#333;left:929.2px;letter-spacing:0.017px;">Departement</span>
<span class="a t " id="t105" style="top:908.85px;font-size:11.3px;line-height:17px;color:#333;left:290.2px;transform:scaleX(0.9813);transform-origin:left center;">Priority</span>
<span class="a t " id="t106" style="top:908.85px;font-size:11.3px;line-height:17px;color:#333;left:546px;letter-spacing:-0.057px;">NORMAL</span>
<span class="a t " id="t107" style="top:908.85px;font-size:11.3px;line-height:17px;color:#333;left:929.2px;letter-spacing:0.030px;">NCR Number</span>
<span class="a t " id="t108" style="top:908.85px;font-size:11.3px;line-height:17px;color:#333;left:1185px;letter-spacing:-0.015px;">0001/90132/PE/POMI/23</span>
<div class="a" style="left:285px;top:954px;width:1283.3px;height:24px;background:#02a8a8;"></div>
<span class="a t " id="t109" style="top:957.8px;font-size:11.3px;line-height:17px;color:#fff;font-weight:700;left:286.8px;letter-spacing:0.043px;">IDENTIFIED</span>
<div class="a" style="left:284.3px;top:978px;width:1px;height:58px;background:#d3d3d3;"></div>
<div class="a" style="left:1567.8999999999999px;top:978px;width:1px;height:58px;background:#d3d3d3;"></div>
<div class="a" style="left:287.1px;top:981.4px;width:256.5999999999999px;height:25.600000000000023px;background:#fff;border:1px solid #d3d3d3;"></div>
<div class="a" style="left:542.9px;top:981.4px;width:383.70000000000005px;height:25.600000000000023px;background:#fff;border:1px solid #d3d3d3;"></div>
<div class="a" style="left:925.8000000000001px;top:981.4px;width:257.0000000000001px;height:25.600000000000023px;background:#fff;border:1px solid #d3d3d3;"></div>
<div class="a" style="left:1182.0px;top:981.4px;width:383.9000000000001px;height:25.600000000000023px;background:#fff;border:1px solid #d3d3d3;"></div>
<div class="a" style="left:287.1px;top:1006.2px;width:256.5999999999999px;height:25.799999999999955px;background:#fff;border:1px solid #d3d3d3;"></div>
<div class="a" style="left:542.9px;top:1006.2px;width:383.70000000000005px;height:25.799999999999955px;background:#fff;border:1px solid #d3d3d3;"></div>
<div class="a" style="left:925.8000000000001px;top:1006.2px;width:257.0000000000001px;height:25.799999999999955px;background:#fff;border:1px solid #d3d3d3;"></div>
<div class="a" style="left:1182.0px;top:1006.2px;width:383.9000000000001px;height:25.799999999999955px;background:#fff;border:1px solid #d3d3d3;"></div>
<div class="a" style="left:285px;top:1034.6px;width:1283.3px;height:1px;background:#d3d3d3;"></div>
<span class="a t " id="t110" style="top:985.9px;font-size:11.3px;line-height:17px;color:#333;left:290.2px;letter-spacing:-0.020px;">Incoming Inspection</span>
<span class="a t " id="t111" style="top:985.9px;font-size:11.3px;line-height:17px;color:#333;left:929.2px;letter-spacing:-0.025px;">In Process Inspection</span>
<div class="a" style="left:546.4px;top:984px;width:377.20000000000005px;height:17.799999999999955px;background:#fff;border:1px solid #bdbdbd;border-radius:3.5px;"></div>
<svg class="a" style="left:909.2px;top:989.9px;" width="10" height="6.2" viewBox="0 0 10 6.2"><path d="M1 1.2L5 5L9 1.2" fill="none" stroke="#333" stroke-width="1.9"/></svg>
<div class="a" style="left:1185px;top:984px;width:377.79999999999995px;height:17.799999999999955px;background:#fff;border:1px solid #bdbdbd;border-radius:3.5px;"></div>
<svg class="a" style="left:1548.3999999999999px;top:989.9px;" width="10" height="6.2" viewBox="0 0 10 6.2"><path d="M1 1.2L5 5L9 1.2" fill="none" stroke="#333" stroke-width="1.9"/></svg>
<span class="a t " id="t112" style="top:1010.8px;font-size:11.3px;line-height:17px;color:#333;left:290.2px;letter-spacing:-0.039px;">Final Inspection</span>
<span class="a t " id="t113" style="top:1010.8px;font-size:11.3px;line-height:17px;color:#333;left:929.2px;letter-spacing:-0.033px;">Other</span>
<div class="a" style="left:546.4px;top:1009px;width:377.20000000000005px;height:17.59999999999991px;background:#fff;border:1px solid #bdbdbd;border-radius:3.5px;"></div>
<svg class="a" style="left:909.2px;top:1014.8px;" width="10" height="6.2" viewBox="0 0 10 6.2"><path d="M1 1.2L5 5L9 1.2" fill="none" stroke="#333" stroke-width="1.9"/></svg>
<div class="a" style="left:1185px;top:1009px;width:377.79999999999995px;height:17.59999999999991px;background:#fff;border:1px solid #bdbdbd;border-radius:3.5px;"></div>
<svg class="a" style="left:1548.3999999999999px;top:1014.8px;" width="10" height="6.2" viewBox="0 0 10 6.2"><path d="M1 1.2L5 5L9 1.2" fill="none" stroke="#333" stroke-width="1.9"/></svg>
<div class="a" style="left:285px;top:1036px;width:1283.3px;height:23.799999999999955px;background:#02a8a8;"></div>
<span class="a t " id="t114" style="top:1039.7px;font-size:11.3px;line-height:17px;color:#fff;font-weight:700;left:286.8px;letter-spacing:-0.009px;">DETAIL</span>
<div class="a" style="left:284.3px;top:1059.8px;width:1px;height:47px;background:#d3d3d3;"></div>
<div class="a" style="left:1567.8999999999999px;top:1059.8px;width:1px;height:47px;background:#d3d3d3;"></div>
<div class="a" style="left:287.1px;top:1063.3px;width:256.6px;height:41.299999999999955px;background:#fff;border:1px solid #d3d3d3;"></div>
<div class="a" style="left:542.9px;top:1063.3px;width:1023.0000000000001px;height:41.299999999999955px;background:#fff;border:1px solid #d3d3d3;"></div>
<div class="a" style="left:287px;top:1107px;width:1281.3px;height:1px;background:#d3d3d3;"></div>
<span class="a t " id="t115" style="top:1067.5px;font-size:11.3px;line-height:17px;color:#333;left:290.2px;letter-spacing:-0.074px;">Remark</span>
<div class="a" style="left:546.4px;top:1066.4px;width:1016.6px;height:35.399999999999864px;background:#fff;border:1px solid #b2b2b2;"></div>
<svg class="a" style="left:1552.5px;top:1091.3px;" width="9" height="9" viewBox="0 0 9 9"><path d="M1 8L8 1M4.6 8L8 4.6" stroke="#555" stroke-width="1"/></svg>
<div class="a" style="left:286.2px;top:1112px;width:1283.0px;height:24px;background:#02a8a8;"></div>
<span class="a t " id="t116" style="top:1115.8px;font-size:11.3px;line-height:17px;color:#fff;font-weight:700;left:288px;transform:scaleX(0.9843);transform-origin:left center;">IMPACT</span>
<div class="a" style="left:286.2px;top:1136px;width:1px;height:97px;background:#d3d3d3;"></div>
<div class="a" style="left:1568.4px;top:1136px;width:1px;height:97px;background:#d3d3d3;"></div>
<div class="a" style="left:288.20000000000005px;top:1139.1999999999998px;width:256.5999999999999px;height:25.600000000000364px;background:#fff;border:1px solid #d3d3d3;"></div>
<div class="a" style="left:544.0px;top:1139.1999999999998px;width:190.79999999999995px;height:25.600000000000364px;background:#fff;border:1px solid #d3d3d3;"></div>
<div class="a" style="left:734.0px;top:1139.1999999999998px;width:256.9px;height:25.600000000000364px;background:#fff;border:1px solid #d3d3d3;"></div>
<div class="a" style="left:990.1px;top:1139.1999999999998px;width:576.9px;height:25.600000000000364px;background:#fff;border:1px solid #d3d3d3;"></div>
<div class="a" style="left:288.20000000000005px;top:1164.0px;width:256.5999999999999px;height:25.800000000000182px;background:#fff;border:1px solid #d3d3d3;"></div>
<div class="a" style="left:544.0px;top:1164.0px;width:190.79999999999995px;height:25.800000000000182px;background:#fff;border:1px solid #d3d3d3;"></div>
<div class="a" style="left:734.0px;top:1164.0px;width:256.9px;height:25.800000000000182px;background:#fff;border:1px solid #d3d3d3;"></div>
<div class="a" style="left:990.1px;top:1164.0px;width:576.9px;height:25.800000000000182px;background:#fff;border:1px solid #d3d3d3;"></div>
<div class="a" style="left:288.20000000000005px;top:1189.0px;width:256.5999999999999px;height:41.600000000000136px;background:#fff;border:1px solid #d3d3d3;"></div>
<div class="a" style="left:544.0px;top:1189.0px;width:190.79999999999995px;height:41.600000000000136px;background:#fff;border:1px solid #d3d3d3;"></div>
<div class="a" style="left:734.0px;top:1189.0px;width:256.9px;height:41.600000000000136px;background:#fff;border:1px solid #d3d3d3;"></div>
<div class="a" style="left:990.1px;top:1189.0px;width:576.9px;height:41.600000000000136px;background:#fff;border:1px solid #d3d3d3;"></div>
<div class="a" style="left:286.2px;top:1232.6px;width:1283px;height:1px;background:#d3d3d3;"></div>
<span class="a t " id="t117" style="top:1143.7px;font-size:11.3px;line-height:17px;color:#333;left:291.3px;letter-spacing:-0.020px;">Impact On Schedule</span>
<span class="a t " id="t118" style="top:1143.7px;font-size:11.3px;line-height:17px;color:#333;left:737.5px;letter-spacing:-0.025px;">Impact On Duration</span>
<div class="a" style="left:547.4px;top:1142px;width:184.0px;height:17.59999999999991px;background:#fff;border:1px solid #bdbdbd;border-radius:3.5px;"></div>
<svg class="a" style="left:717.0px;top:1147.8px;" width="10" height="6.2" viewBox="0 0 10 6.2"><path d="M1 1.2L5 5L9 1.2" fill="none" stroke="#333" stroke-width="1.9"/></svg>
<span class="a t " id="t119" style="top:1168.5px;font-size:11.3px;line-height:17px;color:#333;left:291.3px;letter-spacing:-0.021px;">Impact On Critical</span>
<span class="a t " id="t120" style="top:1168.5px;font-size:11.3px;line-height:17px;color:#333;left:737.5px;letter-spacing:-0.015px;">Impact On Delivery</span>
<div class="a" style="left:547.4px;top:1167px;width:184.0px;height:17.40000000000009px;background:#fff;border:1px solid #bdbdbd;border-radius:3.5px;"></div>
<svg class="a" style="left:717.0px;top:1172.7px;" width="10" height="6.2" viewBox="0 0 10 6.2"><path d="M1 1.2L5 5L9 1.2" fill="none" stroke="#333" stroke-width="1.9"/></svg>
<span class="a t " id="t121" style="top:1193.5px;font-size:11.3px;line-height:17px;color:#333;left:291.3px;letter-spacing:-0.057px;">Savety Issue</span>
<span class="a t " id="t122" style="top:1193.5px;font-size:11.3px;line-height:17px;color:#333;left:737.5px;letter-spacing:-0.018px;">Others</span>
<div class="a" style="left:547.4px;top:1192px;width:184.0px;height:17.40000000000009px;background:#fff;border:1px solid #bdbdbd;border-radius:3.5px;"></div>
<svg class="a" style="left:717.0px;top:1197.7px;" width="10" height="6.2" viewBox="0 0 10 6.2"><path d="M1 1.2L5 5L9 1.2" fill="none" stroke="#333" stroke-width="1.9"/></svg>
<div class="a" style="left:993.2px;top:1142px;width:570.8px;height:17.59999999999991px;background:#fff;border:1px solid #bdbdbd;border-radius:3.5px;"></div>
<svg class="a" style="left:1549.6px;top:1147.8px;" width="10" height="6.2" viewBox="0 0 10 6.2"><path d="M1 1.2L5 5L9 1.2" fill="none" stroke="#333" stroke-width="1.9"/></svg>
<div class="a" style="left:993.2px;top:1167px;width:570.8px;height:17.40000000000009px;background:#fff;border:1px solid #bdbdbd;border-radius:3.5px;"></div>
<svg class="a" style="left:1549.6px;top:1172.7px;" width="10" height="6.2" viewBox="0 0 10 6.2"><path d="M1 1.2L5 5L9 1.2" fill="none" stroke="#333" stroke-width="1.9"/></svg>
<div class="a" style="left:993.2px;top:1192.3px;width:570.8px;height:35.200000000000045px;background:#fff;border:1px solid #b2b2b2;"></div>
<svg class="a" style="left:1553.5px;top:1217.0px;" width="9" height="9" viewBox="0 0 9 9"><path d="M1 8L8 1M4.6 8L8 4.6" stroke="#555" stroke-width="1"/></svg>
<div class="a" style="left:286.2px;top:1235.4px;width:1283.0px;height:24.0px;background:#02a8a8;"></div>
<span class="a t " id="t123" style="top:1239.2px;font-size:11.3px;line-height:17px;color:#fff;font-weight:700;left:288px;letter-spacing:-0.033px;">NCR DOCUMENT</span>
<div class="a" style="left:284.3px;top:1259.4px;width:1px;height:49px;background:#d3d3d3;"></div>
<span class="a t " id="t124" style="top:1264.3px;font-size:11.3px;line-height:17px;color:#333;left:288.2px;">-</span>
<div class="a" style="left:295.2px;top:1263.4px;width:60.6px;height:19.2px;background:#efefef;border:1px solid #767676;border-radius:3px;"></div>
<span class="a t " id="t125" style="top:1263.8px;font-size:12.3px;line-height:18px;color:#111;left:303.2px;transform:scaleX(0.9684);transform-origin:left center;">Pilih File</span>
<span class="a t " id="t126" style="top:1263.8px;font-size:12.3px;line-height:18px;color:#444;left:360.6px;transform:scaleX(0.9728);transform-origin:left center;">Tidak ada file yang dipilih</span>
<span class="a t " id="t127" style="top:1284.8px;font-size:11.3px;line-height:17px;color:#ff0a0a;font-weight:700;font-style:italic;left:288.4px;letter-spacing:-0.017px;">maksimal upload : 35MB.</span>
<div class="a" style="left:285px;top:1308px;width:1283.3px;height:1px;background:#d3d3d3;"></div>
<div class="a" style="left:285px;top:1310.2px;width:1283.3px;height:24.0px;background:#7a7a7a;"></div>
<span class="a t " id="t128" style="top:1314px;font-size:11.3px;line-height:17px;color:#fff;font-weight:700;left:286.8px;letter-spacing:-0.013px;">ROOT CAUSE</span>
<div class="a" style="left:284.3px;top:1334.2px;width:1px;height:56px;background:#d3d3d3;"></div>
<div class="a" style="left:1567.8999999999999px;top:1334.2px;width:1px;height:56px;background:#d3d3d3;"></div>
<div class="a" style="left:287.1px;top:1337.3999999999999px;width:256.5999999999999px;height:25.600000000000136px;background:#fff;border:1px solid #d3d3d3;"></div>
<div class="a" style="left:542.9px;top:1337.3999999999999px;width:383.70000000000005px;height:25.600000000000136px;background:#fff;border:1px solid #d3d3d3;"></div>
<div class="a" style="left:925.8000000000001px;top:1337.3999999999999px;width:257.0000000000001px;height:25.600000000000136px;background:#fff;border:1px solid #d3d3d3;"></div>
<div class="a" style="left:1182.0px;top:1337.3999999999999px;width:383.9000000000001px;height:25.600000000000136px;background:#fff;border:1px solid #d3d3d3;"></div>
<div class="a" style="left:287.1px;top:1362.1999999999998px;width:256.5999999999999px;height:25.700000000000273px;background:#fff;border:1px solid #d3d3d3;"></div>
<div class="a" style="left:542.9px;top:1362.1999999999998px;width:383.70000000000005px;height:25.700000000000273px;background:#fff;border:1px solid #d3d3d3;"></div>
<div class="a" style="left:925.8000000000001px;top:1362.1999999999998px;width:257.0000000000001px;height:25.700000000000273px;background:#fff;border:1px solid #d3d3d3;"></div>
<div class="a" style="left:1182.0px;top:1362.1999999999998px;width:383.9000000000001px;height:25.700000000000273px;background:#fff;border:1px solid #d3d3d3;"></div>
<div class="a" style="left:285px;top:1390px;width:1283.3px;height:1px;background:#d3d3d3;"></div>
<span class="a t " id="t129" style="top:1341.9px;font-size:11.3px;line-height:17px;color:#333;left:290.2px;letter-spacing:-0.037px;">Incorrect Drawings</span>
<span class="a t " id="t130" style="top:1341.9px;font-size:11.3px;line-height:17px;color:#333;left:929.2px;letter-spacing:-0.034px;">Incorrect Supply</span>
<div class="a" style="left:546.4px;top:1340px;width:377.20000000000005px;height:17.799999999999955px;background:#f2f2f2;border:1px solid #cfcfcf;border-radius:3.5px;"></div>
<svg class="a" style="left:909.2px;top:1345.9px;" width="10" height="6.2" viewBox="0 0 10 6.2"><path d="M1 1.2L5 5L9 1.2" fill="none" stroke="#666" stroke-width="1.9"/></svg>
<div class="a" style="left:1185px;top:1340px;width:377.79999999999995px;height:17.799999999999955px;background:#f2f2f2;border:1px solid #cfcfcf;border-radius:3.5px;"></div>
<svg class="a" style="left:1548.3999999999999px;top:1345.9px;" width="10" height="6.2" viewBox="0 0 10 6.2"><path d="M1 1.2L5 5L9 1.2" fill="none" stroke="#666" stroke-width="1.9"/></svg>
<span class="a t " id="t131" style="top:1366.75px;font-size:11.3px;line-height:17px;color:#333;left:290.2px;letter-spacing:-0.007px;">Damage In Transport</span>
<span class="a t " id="t132" style="top:1366.75px;font-size:11.3px;line-height:17px;color:#333;left:929.2px;letter-spacing:-0.002px;">Manufacturing Error</span>
<div class="a" style="left:546.4px;top:1365px;width:377.20000000000005px;height:17.59999999999991px;background:#f2f2f2;border:1px solid #cfcfcf;border-radius:3.5px;"></div>
<svg class="a" style="left:909.2px;top:1370.8px;" width="10" height="6.2" viewBox="0 0 10 6.2"><path d="M1 1.2L5 5L9 1.2" fill="none" stroke="#666" stroke-width="1.9"/></svg>
<div class="a" style="left:1185px;top:1365px;width:377.79999999999995px;height:17.59999999999991px;background:#f2f2f2;border:1px solid #cfcfcf;border-radius:3.5px;"></div>
<svg class="a" style="left:1548.3999999999999px;top:1370.8px;" width="10" height="6.2" viewBox="0 0 10 6.2"><path d="M1 1.2L5 5L9 1.2" fill="none" stroke="#666" stroke-width="1.9"/></svg>
<div class="a" style="left:285px;top:1392px;width:1283.3px;height:24px;background:#7a7a7a;"></div>
<span class="a t " id="t133" style="top:1395.8px;font-size:11.3px;line-height:17px;color:#fff;font-weight:700;left:286.8px;letter-spacing:-0.004px;">CORRECTION ACTION</span>
<div class="a" style="left:284.3px;top:1416px;width:1px;height:49px;background:#d3d3d3;"></div>
<div class="a" style="left:1567.8999999999999px;top:1416px;width:1px;height:49px;background:#d3d3d3;"></div>
<div class="a" style="left:287.1px;top:1419.3px;width:256.6px;height:41.90000000000009px;background:#fff;border:1px solid #d3d3d3;"></div>
<div class="a" style="left:542.9px;top:1419.3px;width:1023.0000000000001px;height:41.90000000000009px;background:#fff;border:1px solid #d3d3d3;"></div>
<div class="a" style="left:285px;top:1463px;width:1283.3px;height:1px;background:#d3d3d3;"></div>
<span class="a t " id="t134" style="top:1423.7px;font-size:11.3px;line-height:17px;color:#333;left:290.2px;letter-spacing:-0.023px;">Corrective Action</span>
<div class="a" style="left:546.4px;top:1422.2px;width:1016.6px;height:35.59999999999991px;background:#eeeeee;border:1px solid #c6c6c6;"></div>
<svg class="a" style="left:1552.5px;top:1447.3px;" width="9" height="9" viewBox="0 0 9 9"><path d="M1 8L8 1M4.6 8L8 4.6" stroke="#555" stroke-width="1"/></svg>
<div class="a" style="left:285px;top:1465.2px;width:1283.3px;height:23.799999999999955px;background:#7a7a7a;"></div>
<span class="a t " id="t135" style="top:1468.9px;font-size:11.3px;line-height:17px;color:#fff;font-weight:700;left:286.8px;letter-spacing:-0.006px;">PREVENTIVE ACTION</span>
<div class="a" style="left:284.3px;top:1489px;width:1px;height:47px;background:#d3d3d3;"></div>
<div class="a" style="left:1567.8999999999999px;top:1489px;width:1px;height:47px;background:#d3d3d3;"></div>
<div class="a" style="left:287.1px;top:1492.3px;width:256.6px;height:41.299999999999955px;background:#fff;border:1px solid #d3d3d3;"></div>
<div class="a" style="left:542.9px;top:1492.3px;width:1023.0000000000001px;height:41.299999999999955px;background:#fff;border:1px solid #d3d3d3;"></div>
<div class="a" style="left:285px;top:1536px;width:1283.3px;height:1px;background:#d3d3d3;"></div>
<span class="a t " id="t136" style="top:1496.7px;font-size:11.3px;line-height:17px;color:#333;left:290.2px;letter-spacing:-0.041px;">Preventive Action</span>
<div class="a" style="left:546.4px;top:1495.6px;width:1016.6px;height:35.0px;background:#eeeeee;border:1px solid #c6c6c6;"></div>
<svg class="a" style="left:1552.5px;top:1520.1px;" width="9" height="9" viewBox="0 0 9 9"><path d="M1 8L8 1M4.6 8L8 4.6" stroke="#555" stroke-width="1"/></svg>
<div class="a" style="left:285px;top:1538.2px;width:1283.3px;height:24.0px;background:#7a7a7a;"></div>
<span class="a t " id="t137" style="top:1542px;font-size:11.3px;line-height:17px;color:#fff;font-weight:700;left:286.8px;letter-spacing:0.006px;">NCR DOCUMENT FEEDBACK</span>
<div class="a" style="left:284.3px;top:1562.2px;width:1px;height:25px;background:#d3d3d3;"></div>
<div class="a" style="left:1567.8999999999999px;top:1562.2px;width:1px;height:25px;background:#d3d3d3;"></div>
<div class="a" style="left:284.3px;top:1586.8px;width:1284.6px;height:1px;background:#d3d3d3;"></div>
<span class="a t " id="t138" style="top:1566.7px;font-size:11.3px;line-height:17px;color:#333;left:287px;">-</span>
</body></html>
